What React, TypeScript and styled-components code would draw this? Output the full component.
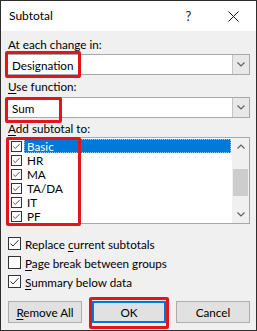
import React from "react";
import styled, { createGlobalStyle } from "styled-components";

const FONT = `Lato, "Noto Sans", "DejaVu Sans", sans-serif`;

const Global = createGlobalStyle`
  html, body { margin: 0; padding: 0; background: #ffffff; }
  body { font-family: ${FONT}; }
`;

const Dialog = styled.div`
  box-sizing: border-box;
  width: 257px;
  height: 331px;
  border: 1px solid #2e2e2e;
  background: #f0f0f0;
  display: flex;
  flex-direction: column;
  font-family: ${FONT};
  font-size: 11.7px;
  color: #000;
  overflow: hidden;
`;

const TitleBar = styled.div`
  height: 30px;
  flex: none;
  background: #ffffff;
  display: flex;
  align-items: center;
  padding-left: 8px;
`;

const Title = styled.div`
  flex: 1;
  font-size: 12px;
  line-height: 16px;
`;

const TitleButton = styled.div`
  width: 45px;
  height: 30px;
  display: flex;
  align-items: center;
  justify-content: center;
  font-size: 13px;
  color: #222;
`;

const Body = styled.div`
  flex: 1;
  display: flex;
  flex-direction: column;
  padding: 5px 6px 0 6px;
`;

const Label = styled.div<{ $gap: number }>`
  margin-top: ${(p) => p.$gap}px;
  padding-left: 1px;
  line-height: 16px;
  height: 16px;
  white-space: nowrap;
`;

const Combo = styled.div<{ $gap: number }>`
  position: relative;
  margin-top: ${(p) => p.$gap}px;
  box-sizing: border-box;
  height: 21px;
  border: 1px solid #a8a8a8;
  background: #fff;
  display: flex;
  align-items: center;
`;

const ComboText = styled.div`
  flex: 1;
  padding-left: 4px;
  line-height: 16px;
`;

const DropButton = styled.div`
  box-sizing: border-box;
  width: 17px;
  height: 19px;
  background: #e8e8e8;
  border-left: 1px solid #c4c4c4;
  display: flex;
  align-items: center;
  justify-content: center;
`;

const RedMark = styled.div<{ $l: number; $t: number; $w: number; $h: number }>`
  position: absolute;
  left: ${(p) => p.$l}px;
  top: ${(p) => p.$t}px;
  width: ${(p) => p.$w}px;
  height: ${(p) => p.$h}px;
  box-sizing: border-box;
  border: 3px solid #e3141c;
  border-radius: 2px;
  pointer-events: none;
`;

const ListBox = styled.div`
  position: relative;
  margin-top: 1px;
  box-sizing: border-box;
  height: 87px;
  border: 1px solid #a8a8a8;
  background: #fff;
  display: flex;
`;

const Items = styled.div`
  flex: 1;
  padding: 1px 0 0 3px;
  display: flex;
  flex-direction: column;
`;

const Item = styled.div`
  height: 14px;
  display: flex;
  align-items: center;
`;

const ItemLabel = styled.div<{ $sel?: boolean }>`
  flex: 1;
  margin-left: 2px;
  margin-right: 1px;
  height: 14px;
  box-sizing: border-box;
  line-height: 12px;
  padding-left: 2px;
  overflow: hidden;
  background: ${(p) => (p.$sel ? "#0078d7" : "transparent")};
  color: ${(p) => (p.$sel ? "#fff" : "#000")};
  border: 1px ${(p) => (p.$sel ? "dotted #9cc8ee" : "solid transparent")};
`;

const Box = styled.div<{ $size: number }>`
  box-sizing: border-box;
  width: ${(p) => p.$size}px;
  height: ${(p) => p.$size}px;
  border: 1px solid #333;
  background: #fff;
  flex: none;
  display: flex;
  align-items: center;
  justify-content: center;
`;

const ScrollBar = styled.div`
  width: 17px;
  background: #f0f0f0;
  display: flex;
  flex-direction: column;
  align-items: center;
`;

const ScrollArrow = styled.div`
  height: 17px;
  width: 17px;
  display: flex;
  align-items: center;
  justify-content: center;
`;

const ScrollTrack = styled.div`
  flex: 1;
  width: 17px;
  display: flex;
  flex-direction: column;
  align-items: center;
  padding-top: 14px;
`;

const Thumb = styled.div`
  width: 15px;
  height: 27px;
  background: #cdcdcd;
`;

const Options = styled.div`
  margin-top: 10px;
  display: flex;
  flex-direction: column;
`;

const Option = styled.label`
  height: 19px;
  display: flex;
  align-items: center;
  padding-left: 1px;
  gap: 4px;
  white-space: nowrap;
`;

const U = styled.span`
  text-decoration: underline;
  text-underline-offset: 2px;
`;

const Buttons = styled.div`
  margin-top: 10px;
  display: grid;
  grid-template-columns: 74px 74px 74px;
  column-gap: 10px;
  padding-left: 1px;
`;

const Button = styled.div<{ $default?: boolean }>`
  position: relative;
  box-sizing: border-box;
  height: 22px;
  background: #e1e1e1;
  border: 1px solid ${(p) => (p.$default ? "#0078d7" : "#adadad")};
  box-shadow: ${(p) => (p.$default ? "inset 0 0 0 1px #0078d7" : "none")};
  display: flex;
  align-items: center;
  justify-content: center;
  line-height: 16px;
`;

const Check = () => (
  <svg width="11" height="11" viewBox="0 0 11 11">
    <polyline points="1.5,5.5 4,8 9.5,2.2" fill="none" stroke="#333" strokeWidth="1" />
  </svg>
);

const Chevron = ({ up }: { up?: boolean }) => (
  <svg width="8" height="5" viewBox="0 0 8 5">
    <polyline
      points={up ? "0.5,4.5 4,1 7.5,4.5" : "0.5,0.5 4,4 7.5,0.5"}
      fill="none"
      stroke="#606060"
      strokeWidth="1.2"
    />
  </svg>
);

const fields = ["Basic", "HR", "MA", "TA/DA", "IT", "PF"];

export default function App() {
  return (
    <>
      <Global />
      <Dialog>
        <TitleBar>
          <Title>Subtotal</Title>
          <TitleButton>?</TitleButton>
          <TitleButton>
            <svg width="11" height="11" viewBox="0 0 11 11">
              <path d="M0.5 0.5 L10.5 10.5 M10.5 0.5 L0.5 10.5" stroke="#111" strokeWidth="1" />
            </svg>
          </TitleButton>
        </TitleBar>
        <Body>
          <Label $gap={0}>At each change in:</Label>
          <Combo $gap={2}>
            <ComboText>Designation</ComboText>
            <DropButton>
              <Chevron />
            </DropButton>
            <RedMark $l={-3} $t={-4} $w={76} $h={27} />
          </Combo>
          <Label $gap={3}>
            <U>U</U>se function:
          </Label>
          <Combo $gap={3}>
            <ComboText>Sum</ComboText>
            <DropButton>
              <Chevron />
            </DropButton>
            <RedMark $l={-3} $t={-1} $w={57} $h={26} />
          </Combo>
          <Label $gap={2}>
            <U>A</U>dd subtotal to:
          </Label>
          <ListBox>
            <Items>
              {fields.map((f, i) => (
                <Item key={f}>
                  <Box $size={11}>
                    <Check />
                  </Box>
                  <ItemLabel $sel={i === 0}>{f}</ItemLabel>
                </Item>
              ))}
            </Items>
            <ScrollBar>
              <ScrollArrow>
                <Chevron up />
              </ScrollArrow>
              <ScrollTrack>
                <Thumb />
              </ScrollTrack>
              <ScrollArrow>
                <Chevron />
              </ScrollArrow>
            </ScrollBar>
            <RedMark $l={-2} $t={-1} $w={75} $h={89} />
          </ListBox>
          <Options>
            <Option>
              <Box $size={13}>
                <Check />
              </Box>
              <span>
                Replace <U>c</U>urrent subtotals
              </span>
            </Option>
            <Option>
              <Box $size={13} />
              <span>
                <U>P</U>age break between groups
              </span>
            </Option>
            <Option>
              <Box $size={13}>
                <Check />
              </Box>
              <span>
                <U>S</U>ummary below data
              </span>
            </Option>
          </Options>
          <Buttons>
            <Button>
              <span>
                <U>R</U>emove All
              </span>
            </Button>
            <Button $default>
              OK
              <RedMark $l={-4} $t={-5} $w={80} $h={32} />
            </Button>
            <Button>Cancel</Button>
          </Buttons>
        </Body>
      </Dialog>
    </>
  );
}
